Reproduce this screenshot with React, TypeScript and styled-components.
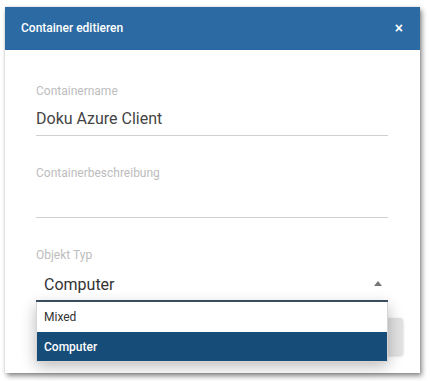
import styled, { createGlobalStyle } from "styled-components";

const GlobalStyle = createGlobalStyle`
  html, body {
    margin: 0;
    padding: 0;
    background: #ffffff;
    font-family: Roboto, "Liberation Sans", Arial, sans-serif;
  }
`;

const options = ["Mixed", "Computer"];

const App: React.FC = () => {
  const selected = "Computer";
  return (
    <>
      <GlobalStyle />
      <Page>
        <Dialog>
          <Header>
            <Title>Container editieren</Title>
            <CloseButton>×</CloseButton>
          </Header>
          <Body>
            <Field>
              <Label>Containername</Label>
              <Input>Doku Azure Client</Input>
            </Field>
            <Field>
              <Label>Containerbeschreibung</Label>
              <Input></Input>
            </Field>
            <Field>
              <Label>Objekt Typ</Label>
              <SelectBox>
                <SelectValue>{selected}</SelectValue>
                <Arrow />
                <Dropdown>
                  {options.map((o) => (
                    <Option key={o} active={o === selected}>
                      {o}
                    </Option>
                  ))}
                </Dropdown>
              </SelectBox>
            </Field>
          </Body>
          <Footer>
            <FooterButton>Speichern</FooterButton>
          </Footer>
        </Dialog>
      </Page>
    </>
  );
};
export default App;

const Page = styled.div`
  padding: 7px 0 0 5px;
  width: 430px;
  height: 381px;
  box-sizing: border-box;
`;
const Dialog = styled.div`
  width: 415px;
  height: 366px;
  background: #ffffff;
  box-shadow: 2px 3px 5px rgba(0, 0, 0, 0.45), 0 0 2px rgba(0, 0, 0, 0.15);
  display: flex;
  flex-direction: column;
`;
const Header = styled.div`
  flex: none;
  height: 43px;
  background: #2c6aa3;
  display: flex;
  align-items: center;
  justify-content: space-between;
  padding: 0 17px 0 16px;
  color: #ffffff;
`;
const Title = styled.div`
  font-size: 12px;
  font-weight: 500;
  margin-top: -1px;
`;
const CloseButton = styled.div`
  font-size: 14px;
  font-weight: 700;
  line-height: 1;
  font-family: "Liberation Sans", Arial, sans-serif;
  margin-top: -1px;
`;
const Body = styled.div`
  flex: none;
  padding: 34px 32px 0 31px;
  display: flex;
  flex-direction: column;
  gap: 30px;
`;
const Field = styled.div`
  display: flex;
  flex-direction: column;
`;
const Label = styled.div`
  font-size: 12px;
  line-height: 14px;
  color: #bdbdbd;
`;
const Input = styled.div`
  height: 38px;
  box-sizing: border-box;
  padding-top: 4px;
  display: flex;
  align-items: center;
  font-size: 16px;
  color: #444444;
  border-bottom: 1px solid #d0d0d0;
`;
const SelectBox = styled.div`
  position: relative;
  height: 40px;
  box-sizing: border-box;
  padding: 6px 0 0 8px;
  display: flex;
  align-items: center;
  border-bottom: 2px solid #3f5262;
`;
const SelectValue = styled.div`
  flex: 1;
  font-size: 16px;
  color: #333333;
`;
const Arrow = styled.div`
  width: 0;
  height: 0;
  border-left: 4px solid transparent;
  border-right: 4px solid transparent;
  border-bottom: 5px solid #777777;
  margin-right: 6px;
  margin-top: -2px;
`;
const Dropdown = styled.div`
  position: absolute;
  top: 100%;
  margin-top: 2px;
  left: 0;
  right: 0;
  background: #ffffff;
  border: 1px solid #d6d6d6;
  border-top: none;
  box-shadow: 0 4px 14px rgba(0, 0, 0, 0.28);
  z-index: 2;
`;
const Option = styled.div<{ active: boolean }>`
  height: ${({ active }) => (active ? "29px" : "30px")};
  display: flex;
  align-items: center;
  padding-left: 7px;
  font-size: 12px;
  font-weight: ${({ active }) => (active ? 500 : 400)};
  color: ${({ active }) => (active ? "#ffffff" : "#333333")};
  background: ${({ active }) => (active ? "#164c78" : "#ffffff")};
`;
const Footer = styled.div`
  flex: none;
  display: flex;
  justify-content: flex-end;
  padding: 16px 17px 0 0;
`;
const FooterButton = styled.div`
  width: 100px;
  height: 37px;
  border-radius: 3px;
  background: #e2e2e2;
  box-shadow: 0 1px 3px rgba(0, 0, 0, 0.2);
  display: flex;
  align-items: center;
  justify-content: center;
  font-size: 12px;
  color: #555555;
`;
